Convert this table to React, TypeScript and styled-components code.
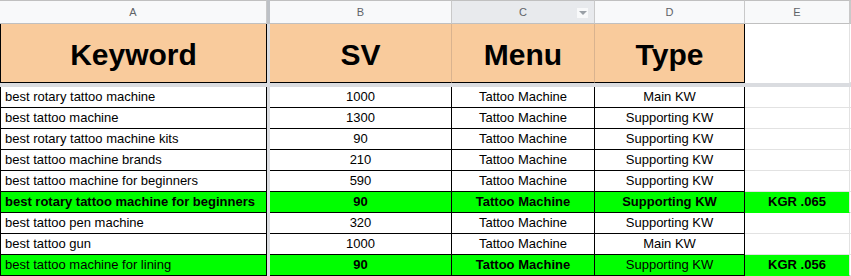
import React from "react";
import styled, { createGlobalStyle, css } from "styled-components";

const Global = createGlobalStyle`
  html, body { margin: 0; padding: 0; background: #fff; overflow: hidden; }
  body { font-family: "Liberation Sans", Arial, sans-serif; }
`;

const COLS = "267px 3px 182px 143px 150px 105px 1fr";

const Sheet = styled.div`
  width: 851px;
  height: 276px;
  overflow: hidden;
  display: flex;
  flex-direction: column;
`;

const Row = styled.div<{ $h: number }>`
  display: grid;
  grid-template-columns: ${COLS};
  height: ${(p) => p.$h}px;
  flex: none;
`;

const ColHead = styled.div<{ $active?: boolean }>`
  position: relative;
  box-sizing: border-box;
  height: 24px;
  border-top: 1px solid #c0c0c0;
  border-bottom: 1px solid #c0c0c0;
  border-right: 1px solid #c9c9c9;
  background: ${(p) => (p.$active ? "#e8eaed" : "#f8f9fa")};
  color: #5f6368;
  font-size: 11px;
  line-height: 22px;
  text-align: center;
`;

const FrozenV = styled.div<{ $dark?: boolean }>`
  background: ${(p) => (p.$dark ? "#bdc1c6" : "#dadce0")};
`;

const Dropdown = styled.span`
  position: absolute;
  right: 6px;
  top: 7px;
  width: 11px;
  height: 10px;
  background: #f8f9fa;
  display: flex;
  align-items: center;
  justify-content: center;
  &::after {
    content: "";
    border-left: 4px solid transparent;
    border-right: 4px solid transparent;
    border-top: 4px solid #9aa0a6;
  }
`;

const Title = styled.div<{ $first?: boolean; $empty?: boolean }>`
  box-sizing: border-box;
  display: flex;
  align-items: center;
  justify-content: center;
  padding-top: 4px;
  font-size: 30px;
  font-weight: bold;
  color: #000;
  ${(p) =>
    p.$empty
      ? css`
          background: #fff;
          border-right: 1px solid #e2e2e2;
        `
      : css`
          background: #f9cb9c;
          border-bottom: 1px solid #000;
          border-right: 1px solid #d9b38f;
        `}
  ${(p) =>
    p.$first &&
    css`
      border-left: 1px solid #000;
      border-right: 1px solid #000;
    `}
`;

const TitleLast = styled(Title)`
  border-right: 1px solid #000;
`;

const FreezeBar = styled.div`
  height: 4px;
  flex: none;
  background: #dadce0;
`;

const Cell = styled.div<{
  $first?: boolean;
  $center?: boolean;
  $bold?: boolean;
  $green?: boolean;
  $plain?: boolean;
}>`
  box-sizing: border-box;
  padding: 0 3px;
  font-size: 13px;
  line-height: 20px;
  color: #000;
  white-space: nowrap;
  overflow: hidden;
  text-align: ${(p) => (p.$center ? "center" : "left")};
  font-weight: ${(p) => (p.$bold ? "bold" : "normal")};
  background: ${(p) => (p.$green ? "#00ff00" : "#fff")};
  border-bottom: 1px solid ${(p) => (p.$plain && !p.$green ? "#e2e2e2" : "#000")};
  border-right: 1px solid ${(p) => (p.$plain ? "#e2e2e2" : "#000")};
  ${(p) =>
    p.$first &&
    css`
      border-left: 1px solid #000;
      padding-left: 4px;
    `}
  ${(p) =>
    p.$plain &&
    p.$green &&
    css`
      border-bottom: 1px solid #00ff00;
      box-shadow: inset 0 -1px 0 #00ff00;
    `}
`;

const Rest = styled.div`
  background: #fff;
  border-bottom: 1px solid #e2e2e2;
`;

type R = {
  kw: string;
  sv: string;
  menu: string;
  type: string;
  note?: string;
  green?: boolean;
  b?: [boolean, boolean, boolean, boolean, boolean];
};

const rows: R[] = [
  { kw: "best rotary tattoo machine", sv: "1000", menu: "Tattoo Machine", type: "Main KW" },
  { kw: "best tattoo machine", sv: "1300", menu: "Tattoo Machine", type: "Supporting KW" },
  { kw: "best rotary tattoo machine kits", sv: "90", menu: "Tattoo Machine", type: "Supporting KW" },
  { kw: "best tattoo machine brands", sv: "210", menu: "Tattoo Machine", type: "Supporting KW" },
  { kw: "best tattoo machine for beginners", sv: "590", menu: "Tattoo Machine", type: "Supporting KW" },
  {
    kw: "best rotary tattoo machine for beginners",
    sv: "90",
    menu: "Tattoo Machine",
    type: "Supporting KW",
    note: "KGR .065",
    green: true,
    b: [true, true, true, true, true],
  },
  { kw: "best tattoo pen machine", sv: "320", menu: "Tattoo Machine", type: "Supporting KW" },
  { kw: "best tattoo gun", sv: "1000", menu: "Tattoo Machine", type: "Main KW" },
  {
    kw: "best tattoo machine for lining",
    sv: "90",
    menu: "Tattoo Machine",
    type: "Supporting KW",
    note: "KGR .056",
    green: true,
    b: [false, true, true, false, true],
  },
];

export default function App() {
  return (
    <>
      <Global />
      <Sheet>
        <Row $h={24}>
          <ColHead>A</ColHead>
          <FrozenV $dark />
          <ColHead>B</ColHead>
          <ColHead $active>
            C
            <Dropdown />
          </ColHead>
          <ColHead>D</ColHead>
          <ColHead>E</ColHead>
          <ColHead />
        </Row>
        <Row $h={59}>
          <Title $first>Keyword</Title>
          <FrozenV />
          <Title>SV</Title>
          <Title>Menu</Title>
          <TitleLast>Type</TitleLast>
          <Title $empty />
          <Rest />
        </Row>
        <FreezeBar />
        {rows.map((r, i) => {
          const b = r.b ?? [false, false, false, false, false];
          return (
            <Row $h={21} key={i}>
              <Cell $first $bold={b[0]} $green={r.green}>
                {r.kw}
              </Cell>
              <FrozenV />
              <Cell $center $bold={b[1]} $green={r.green}>
                {r.sv}
              </Cell>
              <Cell $center $bold={b[2]} $green={r.green}>
                {r.menu}
              </Cell>
              <Cell $center $bold={b[3]} $green={r.green}>
                {r.type}
              </Cell>
              <Cell $center $plain $bold={b[4]} $green={r.green}>
                {r.note ?? ""}
              </Cell>
              <Rest />
            </Row>
          );
        })}
      </Sheet>
    </>
  );
}
